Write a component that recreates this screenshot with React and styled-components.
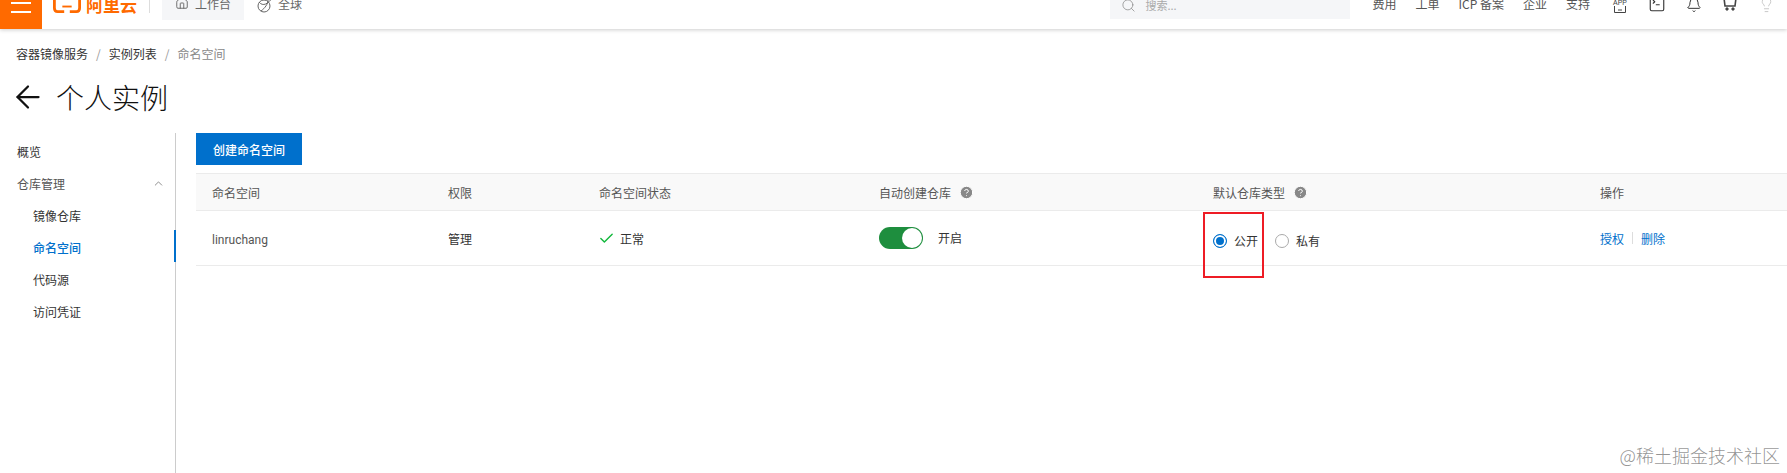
import React from 'react'
import styled, { createGlobalStyle } from 'styled-components'
import { Home, Search, Bell, SquareTerminal, ChevronUp, Check, ArrowLeft, CircleHelp, Lightbulb } from 'lucide-react'

const GlobalStyle = createGlobalStyle`
    html, body {
        margin: 0;
        padding: 0;
        background: #fff;
        overflow: hidden;
    }
    body {
        font-family: "Noto Sans CJK SC", "Noto Sans", sans-serif;
        font-size: 12px;
        color: #333;
    }
`;

const columns = [
    { title: '命名空间', width: 236 },
    { title: '权限', width: 151 },
    { title: '命名空间状态', width: 280 },
    { title: '自动创建仓库', width: 334, help: true },
    { title: '默认仓库类型', width: 387, help: true },
    { title: '操作', width: 203 },
];

const App = () => {
    return (
        <Page>
            <GlobalStyle />
            <TopBar>
                <MenuButton><span /><span /></MenuButton>
                <Logo>
                    <svg width="30" height="14" viewBox="0 0 30 14" fill="none" stroke="#ff6a00" strokeWidth="3">
                        <path d="M1.5 -4V8Q1.5 12 5 12H12" />
                        <path d="M28.5 -4V8Q28.5 12 25 12H18" />
                        <path d="M10 6.5H20" strokeWidth="2" />
                    </svg>
                    <LogoText>阿里云</LogoText>
                </Logo>
                <NavDivider />
                <NavTab>
                    <Home size={14} strokeWidth={1.6} />
                    <span>工作台</span>
                </NavTab>
                <NavLink>
                    <svg width="18" height="18" viewBox="0 0 18 18" fill="none" stroke="#666" strokeWidth="1">
                        <circle cx="8" cy="10" r="6" />
                        <path d="M3 6C7 11 12 8 17 1M5 15C9 12 12 8 12 4" />
                    </svg>
                    <span>全球</span>
                </NavLink>
                <Spacer />
                <SearchBox>
                    <Search size={15} strokeWidth={1.2} color="#888" />
                    <span>搜索...</span>
                </SearchBox>
                <TopLinks>
                    <span>费用</span>
                    <span>工单</span>
                    <span>ICP 备案</span>
                    <span>企业</span>
                    <span>支持</span>
                </TopLinks>
                <TopIcons>
                    <AppIcon>
                        <svg width="16" height="16" viewBox="0 0 16 16" fill="none" stroke="#444" strokeWidth="1">
                            <path d="M2.5 9V15.5H13.5V9" />
                            <path d="M6 13H10" />
                        </svg>
                        <AppLabel>APP</AppLabel>
                    </AppIcon>
                    <SquareTerminal size={18} strokeWidth={1.5} />
                    <Bell size={16} strokeWidth={1.5} />
                    <svg width="16" height="16" viewBox="0 0 16 16" fill="#444" stroke="#444">
                        <path d="M2 1H14L13 9H3Z" fill="none" strokeWidth="1.6" />
                        <circle cx="5" cy="12" r="1.2" />
                        <circle cx="11" cy="12" r="1.2" />
                    </svg>
                    <Lightbulb size={17} strokeWidth={1.3} color="#c4c4c4" />
                </TopIcons>
            </TopBar>

            <Crumbs>
                <span>容器镜像服务</span>
                <CrumbSep>/</CrumbSep>
                <span>实例列表</span>
                <CrumbSep>/</CrumbSep>
                <CrumbLast>命名空间</CrumbLast>
            </Crumbs>

            <TitleRow>
                <ArrowLeft size={36} strokeWidth={1.5} color="#111" />
                <Title>个人实例</Title>
            </TitleRow>

            <Body>
                <Sidebar>
                    <SideItem>概览</SideItem>
                    <SideGroup>
                        <span>仓库管理</span>
                        <ChevronUp size={13} strokeWidth={1.2} />
                    </SideGroup>
                    <SideItem $sub>镜像仓库</SideItem>
                    <SideItem $sub $active>命名空间</SideItem>
                    <SideItem $sub>代码源</SideItem>
                    <SideItem $sub>访问凭证</SideItem>
                </Sidebar>
                <Content>
                    <PrimaryButton>创建命名空间</PrimaryButton>
                    <Table>
                        <HeadRow>
                            {columns.map(col => (
                                <Cell key={col.title} $width={col.width}>
                                    {col.title}
                                    {col.help && <HelpIcon><CircleHelp size={15} color="#fff" fill="#888" strokeWidth={1.6} /></HelpIcon>}
                                </Cell>
                            ))}
                        </HeadRow>
                        <DataRow>
                            <Cell $width={236}><Latin>linruchang</Latin></Cell>
                            <Cell $width={151}>管理</Cell>
                            <Cell $width={280}>
                                <StatusCheck><Check size={17} strokeWidth={2} color="#12b83c" /></StatusCheck>
                                <StatusText>正常</StatusText>
                            </Cell>
                            <Cell $width={334}>
                                <Switch><Knob /></Switch>
                                <SwitchText>开启</SwitchText>
                            </Cell>
                            <Cell $width={387}>
                                <RadioLabel $checked><RadioDot $checked />公开</RadioLabel>
                                <RadioLabel><RadioDot />私有</RadioLabel>
                            </Cell>
                            <Cell $width={203}>
                                <ActionLink>授权</ActionLink>
                                <ActionSep />
                                <ActionLink>删除</ActionLink>
                            </Cell>
                        </DataRow>
                    </Table>
                </Content>
            </Body>
            <Highlight />
            <Watermark>@稀土掘金技术社区</Watermark>
        </Page>
    )
}

export default App

const Page = styled.div`
    width: 1787px;
    height: 473px;
    position: relative;
    overflow: hidden;
    background: #fff;
`;

const TopBar = styled.header`
    height: 29px;
    display: flex;
    align-items: flex-start;
    background: #fff;
    box-shadow: 0 1px 4px rgba(0, 0, 0, 0.2);
    overflow: hidden;
    position: relative;
`;

const MenuButton = styled.div`
    width: 42px;
    height: 29px;
    flex: none;
    background: #ff6a00;
    display: flex;
    flex-direction: column;
    align-items: center;
    gap: 6.5px;
    padding-top: 2px;
    box-sizing: border-box;

    span {
        width: 20px;
        height: 2px;
        background: #fff;
    }
`;

const Logo = styled.div`
    display: flex;
    align-items: flex-start;
    gap: 5px;
    margin-left: 11px;
    width: 84px;
    height: 14px;
    flex: none;
`;

const LogoText = styled.span`
    font-size: 17px;
    line-height: 14px;
    margin-top: -2px;
    font-weight: 700;
    color: #ff6a00;
    white-space: nowrap;
`;

const NavDivider = styled.div`
    width: 1px;
    height: 13px;
    margin: 0 12px 0 12px;
    background: #ddd;
`;

const NavTab = styled.div`
    width: 82px;
    height: 20px;
    display: flex;
    align-items: flex-start;
    justify-content: center;
    gap: 6px;
    background: #f5f6f8;
    color: #666;
    line-height: 12px;
    flex: none;

    span { margin-top: -2px; }
    svg { margin-top: -4px; }
`;

const NavLink = styled.div`
    margin-left: 12px;
    display: flex;
    align-items: flex-start;
    gap: 4px;
    color: #666;
    line-height: 12px;

    span { margin-top: -2px; }
    svg { margin-top: -4px; }
`;

const Spacer = styled.div`
    flex: 1;
`;

const SearchBox = styled.div`
    width: 240px;
    height: 19px;
    padding-left: 11px;
    box-sizing: border-box;
    display: flex;
    align-items: flex-start;
    gap: 9px;
    background: #f5f6f8;
    color: #aaa;
    font-size: 11px;
    line-height: 10px;
    flex: none;

    svg { margin-top: -2px; }
`;

const TopLinks = styled.div`
    display: flex;
    gap: 19px;
    margin: -2px 0 0 22px;
    color: #555;
    line-height: 12px;
    white-space: nowrap;
    flex: none;
`;

const TopIcons = styled.div`
    display: flex;
    gap: 20px;
    height: 13px;
    margin: 0 12px 0 22px;
    color: #333;
    align-items: flex-end;
    flex: none;
`;

const AppIcon = styled.div`
    width: 16px;
    height: 16px;
    position: relative;
    flex: none;
`;

const AppLabel = styled.span`
    position: absolute;
    left: 0;
    top: 2px;
    width: 16px;
    text-align: center;
    font-family: "Liberation Sans", sans-serif;
    font-size: 7px;
    line-height: 7px;
    color: #444;
`;

const Crumbs = styled.nav`
    display: flex;
    gap: 8px;
    padding: 16px 0 0 16px;
    height: 17px;
    line-height: 17px;
    color: #333;
`;

const CrumbSep = styled.span`
    color: #999;
`;

const CrumbLast = styled.span`
    color: #888;
`;

const TitleRow = styled.div`
    display: flex;
    align-items: center;
    gap: 10px;
    padding: 15px 0 0 10px;
    height: 40px;
`;

const Title = styled.h1`
    margin: 0;
    font-size: 28px;
    font-weight: 300;
    line-height: 40px;
    color: #111;
`;

const Body = styled.div`
    display: flex;
    padding-top: 16px;
`;

const Sidebar = styled.aside`
    width: 176px;
    height: 340px;
    flex: none;
    box-sizing: border-box;
    padding-top: 1px;
    border-right: 1px solid #ccc;
`;

const SideItem = styled.div`
    height: 32px;
    line-height: 36px;
    padding-left: ${props => props.$sub ? "33px" : "17px"};
    margin-right: -1px;
    color: ${props => props.$active ? "#0070cc" : "#333"};
    font-weight: ${props => props.$active ? 500 : 400};
    border-right: 2px solid ${props => props.$active ? "#0070cc" : "transparent"};
`;

const SideGroup = styled.div`
    height: 32px;
    box-sizing: border-box;
    padding: 3px 10px 0 17px;
    display: flex;
    align-items: center;
    justify-content: space-between;
    color: #555;
`;

const Content = styled.main`
    flex: 1;
    padding-left: 20px;
`;

const PrimaryButton = styled.button`
    display: block;
    width: 106px;
    height: 32px;
    padding: 0;
    border: none;
    background: #0070cc;
    color: #fff;
    font-family: inherit;
    font-size: 12px;
    font-weight: 500;
`;

const Table = styled.div`
    margin-top: 8px;
`;

const HeadRow = styled.div`
    display: flex;
    height: 38px;
    box-sizing: border-box;
    background: #f9f9f9;
    border-top: 1px solid #ebebeb;
    border-bottom: 1px solid #ebebeb;
    color: #555;
`;

const DataRow = styled.div`
    display: flex;
    height: 55px;
    box-sizing: border-box;
    border-bottom: 1px solid #ebebeb;
`;

const Cell = styled.div`
    width: ${props => props.$width}px;
    flex: none;
    box-sizing: border-box;
    padding-left: 16px;
    display: flex;
    align-items: center;
`;

const Latin = styled.span`
    font-family: Roboto, sans-serif;
    color: #555;
    margin-top: 4px;
`;

const HelpIcon = styled.span`
    display: inline-flex;
    margin-left: 8px;
`;

const StatusCheck = styled.span`
    display: inline-flex;
    margin-left: -1px;
`;

const StatusText = styled.span`
    margin-left: 5px;
`;

const Switch = styled.div`
    width: 44px;
    height: 22px;
    margin-top: -1px;
    border-radius: 11px;
    background: #1e8e3e;
    display: flex;
    justify-content: flex-end;
    padding: 1px;
    box-sizing: border-box;
`;

const Knob = styled.div`
    width: 20px;
    height: 20px;
    border-radius: 50%;
    background: #fff;
`;

const SwitchText = styled.span`
    margin: -1px 0 0 15px;
`;

const RadioLabel = styled.label`
    display: flex;
    align-items: center;
    margin-top: 5px;
    margin-right: ${props => props.$checked ? "17px" : 0};
    gap: 7px;
`;

const RadioDot = styled.span`
    width: 14px;
    height: 14px;
    box-sizing: border-box;
    border-radius: 50%;
    background: ${props => props.$checked ? "#0070cc" : "#fff"};
    border: 1px solid ${props => props.$checked ? "#0070cc" : "#aaa"};
    box-shadow: ${props => props.$checked ? "inset 0 0 0 2px #fff" : "none"};
`;

const ActionLink = styled.a`
    color: #0070cc;
`;

const ActionSep = styled.span`
    width: 1px;
    height: 12px;
    margin: 0 8px;
    background: #ddd;
`;

const Highlight = styled.div`
    position: absolute;
    left: 1203px;
    top: 212px;
    width: 61px;
    height: 66px;
    box-sizing: border-box;
    border: 2px solid #ee1c25;
`;

const Watermark = styled.div`
    position: absolute;
    right: 7px;
    top: 443px;
    font-size: 18px;
    line-height: 24px;
    font-weight: 300;
    color: rgba(120, 120, 120, 0.8);
    white-space: nowrap;
`;
